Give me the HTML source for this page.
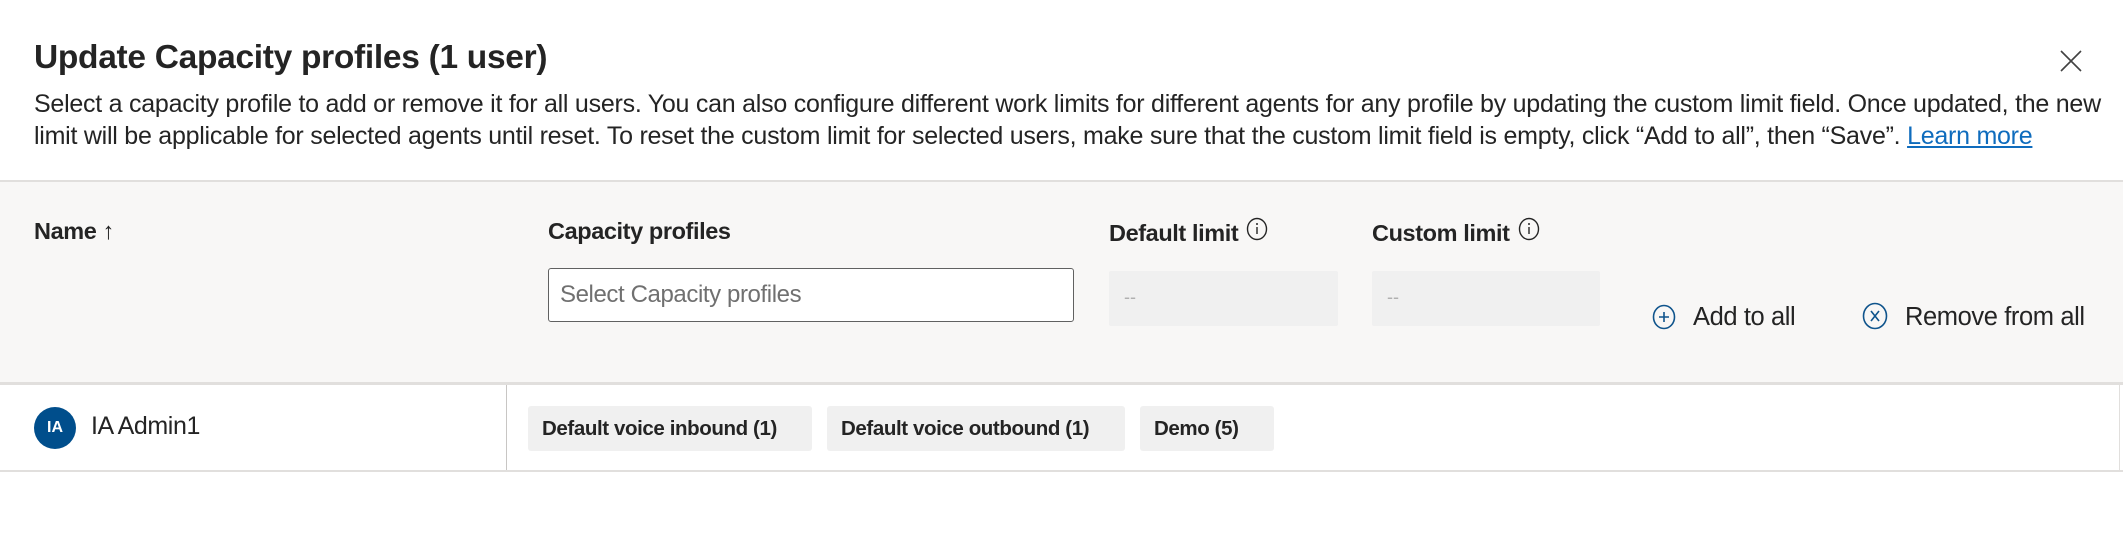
<!DOCTYPE html>
<html><head><style>
body{margin:0;width:2123px;height:538px;background:#fff;font-family:"Liberation Sans",sans-serif;color:#242424;position:relative;overflow:hidden}
.a{position:absolute;white-space:nowrap}
.title{left:34px;top:39px;font-size:33.5px;font-weight:600;letter-spacing:-0.3px}
.desc{left:34px;font-size:25px;letter-spacing:-0.25px;color:#242424}
.band{position:absolute;left:0;top:180px;width:2123px;height:205px;background:#f8f7f6;border-top:2px solid #e1dfdd;border-bottom:3px solid #e1dfdd;box-sizing:border-box}
.h{font-size:23.5px;font-weight:700;letter-spacing:-0.4px}
.h svg{vertical-align:top;margin-left:8px;margin-top:-3px}
.box{position:absolute;background:#f0f0f0;border-radius:2px}
.chip{position:absolute;top:406px;height:45px;background:#f0f0f0;border-radius:3px;font-size:20.5px;font-weight:700;line-height:45px;padding-left:14px;box-sizing:border-box;letter-spacing:-0.4px}
</style></head><body>
<div class="a title">Update Capacity profiles (1 user)</div>
<svg class="a" style="left:2060px;top:50px" width="22" height="22" viewBox="0 0 22 22"><path d="M1 1L21 21M21 1L1 21" stroke="#424242" stroke-width="1.6" fill="none"/></svg>
<div class="a desc" style="top:90px">Select a capacity profile to add or remove it for all users. You can also configure different work limits for different agents for any profile by updating the custom limit field. Once updated, the new</div>
<div class="a desc" style="top:122px">limit will be applicable for selected agents until reset. To reset the custom limit for selected users, make sure that the custom limit field is empty, click “Add to all”, then “Save”. <span style="color:#0f6cbd;text-decoration:underline">Learn more</span></div>
<div class="band"></div>
<div class="a h" style="left:34px;top:218px">Name <span style="font-weight:400">↑</span></div>
<div class="a h" style="left:548px;top:218px">Capacity profiles</div>
<div class="a" style="left:548px;top:268px;width:526px;height:54px;background:#fff;border:1.5px solid #616161;border-radius:3px;box-sizing:border-box"></div>
<div class="a" style="left:560px;top:281px;font-size:24px;color:#707070;letter-spacing:-0.4px">Select Capacity profiles</div>
<div class="a h" style="left:1109px;top:220px">Default limit<svg width="22" height="24" viewBox="0 0 22 24"><ellipse cx="11" cy="12" rx="9.5" ry="10.5" stroke="#242424" stroke-width="1.4" fill="none"/><path d="M11 10v7" stroke="#242424" stroke-width="1.4"/><circle cx="11" cy="7" r="1" fill="#242424"/></svg></div>
<div class="a h" style="left:1372px;top:220px">Custom limit<svg width="22" height="24" viewBox="0 0 22 24"><ellipse cx="11" cy="12" rx="9.5" ry="10.5" stroke="#242424" stroke-width="1.4" fill="none"/><path d="M11 10v7" stroke="#242424" stroke-width="1.4"/><circle cx="11" cy="7" r="1" fill="#242424"/></svg></div>
<div class="box" style="left:1109px;top:271px;width:229px;height:55px"></div>
<div class="a" style="left:1124px;top:287px;color:#b0b0b0;font-size:18px">--</div>
<div class="box" style="left:1372px;top:271px;width:228px;height:55px"></div>
<div class="a" style="left:1387px;top:287px;color:#b0b0b0;font-size:18px">--</div>
<svg class="a" style="left:1652px;top:304px" width="24" height="26" viewBox="0 0 24 26"><ellipse cx="12" cy="13" rx="10.5" ry="11.5" stroke="#0f548c" stroke-width="1.6" fill="none"/><path d="M12 8v10M7 13h10" stroke="#0f548c" stroke-width="1.6"/></svg>
<div class="a" style="left:1693px;top:303px;font-size:25.5px;letter-spacing:-0.4px">Add to all</div>
<svg class="a" style="left:1862px;top:302px" width="26" height="28" viewBox="0 0 26 28"><ellipse cx="13" cy="14" rx="11.5" ry="12.5" stroke="#0f548c" stroke-width="1.6" fill="none"/><path d="M9 9l8 10M17 9l-8 10" stroke="#0f548c" stroke-width="1.6"/></svg>
<div class="a" style="left:1905px;top:303px;font-size:25.5px;letter-spacing:-0.4px">Remove from all</div>
<div class="a" style="left:506px;top:385px;width:1px;height:86px;background:#c8c6c4"></div>
<div class="a" style="left:2119px;top:385px;width:1px;height:86px;background:#e1dfdd"></div>
<div class="a" style="left:0;top:470px;width:2123px;height:2px;background:#e1dfdd"></div>
<div class="a" style="left:34px;top:407px;width:42px;height:42px;border-radius:50%;background:#004e8c;color:#fff;font-size:16px;font-weight:700;text-align:center;line-height:42px">IA</div>
<div class="a" style="left:91px;top:412px;font-size:25px;letter-spacing:-0.4px">IA Admin1</div>
<div class="chip" style="left:528px;width:284px">Default voice inbound (1)</div>
<div class="chip" style="left:827px;width:298px">Default voice outbound (1)</div>
<div class="chip" style="left:1140px;width:134px">Demo (5)</div>
</body></html>
